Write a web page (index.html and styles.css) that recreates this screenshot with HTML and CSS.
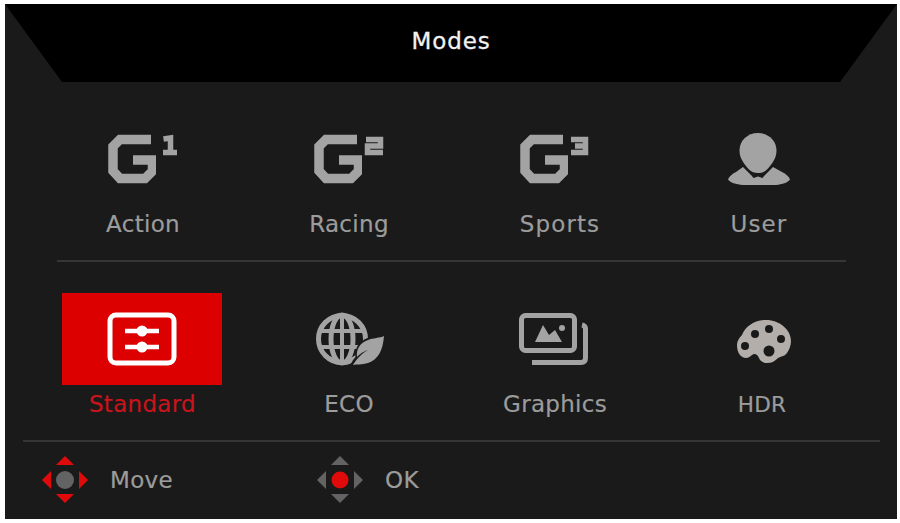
FILE: index.html
```html
<!DOCTYPE html>
<html>
<head>
<meta charset="utf-8">
<title>Modes</title>
<link rel="stylesheet" href="styles.css">
</head>
<body>
<svg class="defs" width="0" height="0">
	<symbol id="g-mark" viewBox="0 0 50 54">
		<polyline points="45,7.5 14,7.5 7,14.5 7,39 14,46.5 39,46.5 46.5,39 46.5,28 27,28"/>
	</symbol>
</svg>
<div class="panel">
	<div class="title">Modes</div>

	<div class="modes first">
		<div class="mode">
			<svg class="icon-g" viewBox="0 0 74 54">
				<use href="#g-mark" width="50" height="54" class="g"/>
				<polyline class="sup" points="57.5,7 64.5,6 64.5,21"/>
				<line class="sup" x1="57" y1="20.5" x2="71" y2="20.5"/>
			</svg>
			<span class="label">Action</span>
		</div>
		<div class="mode">
			<svg class="icon-g" viewBox="0 0 74 54">
				<use href="#g-mark" width="50" height="54" class="g"/>
				<polyline class="sup" points="54,7.5 68.5,7.5 68.5,14 55.5,14 55.5,20.5 71,20.5"/>
			</svg>
			<span class="label">Racing</span>
		</div>
		<div class="mode">
			<svg class="icon-g" viewBox="0 0 74 54">
				<use href="#g-mark" width="50" height="54" class="g"/>
				<polyline class="sup" points="53,7.5 67.5,7.5 67.5,20.5 53,20.5"/>
				<line class="sup" x1="57" y1="14" x2="67" y2="14"/>
			</svg>
			<span class="label wide sports">Sports</span>
		</div>
		<div class="mode">
			<svg class="icon-g" viewBox="725 132 74 54">
				<path class="fill" d="M759 133c10.500 0 18.500 7.500 18.500 17.500 0 8-5 14-9 18.500-3 3-6 4-9.500 4s-6.500-1-9.500-4c-4-4.500-9-10.500-9-18.500 0-10 8-17.500 18.500-17.500z"/>
				<path class="fill" d="M744 167l8.500 8.500 2 2.500 4.500-1.500 4.500 1.500 2-2.500 8.500-8.500 9 5c4 2 7 4.500 8 7.500-2 3-8 5-14 5.500h-33c-7-.5-13-2.500-15-5.500 1-3 4-5.500 8-7.500z"/>
			</svg>
			<span class="label wide user">User</span>
		</div>
	</div>
	<div class="line short"></div>

	<div class="modes second">
		<div class="mode">
			<div class="tile">
				<svg class="icon-std" viewBox="0 0 72 56">
					<rect x="4" y="4" width="64" height="48" rx="6"/>
					<line x1="19" y1="20" x2="53" y2="20"/>
					<line x1="19" y1="36" x2="53" y2="36"/>
					<circle cx="36" cy="20" r="5.500"/>
					<circle cx="36" cy="36" r="5.500"/>
				</svg>
			</div>
			<span class="label">Standard</span>
		</div>
		<div class="mode">
			<svg class="icon-big" viewBox="309 293 80 92">
				<g class="globe">
					<circle cx="342" cy="339" r="23.500"/>
					<ellipse cx="342" cy="339" rx="11" ry="24"/>
					<line x1="342" y1="315" x2="342" y2="363"/>
					<line x1="319" y1="331" x2="365" y2="331"/>
					<line x1="319" y1="347" x2="365" y2="347"/>
				</g>
				<path class="halo" d="M384 336c-1 14-6 24-16 27-6 2-12 1-15 2 1-2 3-5 5-7-1-9 3-15 11-18 5-2 11-2 15-4z"/>
				<path class="fill" d="M384 336c-1 14-6 24-16 27-6 2-12 1-15 2 1-2 7-11 15-15-6 2-9 5-11 7-1-8 3-14 11-17 5-2 12-2 16-4z"/>
			</svg>
			<span class="label">ECO</span>
		</div>
		<div class="mode">
			<svg class="icon-big" viewBox="515 293 80 92">
				<rect class="frame" x="521.500" y="315.500" width="53" height="35" rx="4"/>
				<path class="frame" d="M532 362.500h49c3 0 4.500-1.500 4.500-4.500v-29c0-2-1-3.500-3.500-4"/>
				<path class="fill" d="M535 342l8-17 6 10 6-5 7 12z"/>
				<circle class="fill" cx="562" cy="328" r="3"/>
			</svg>
			<span class="label">Graphics</span>
		</div>
		<div class="mode">
			<svg class="icon-big" viewBox="721 293 80 92">
				<path class="palette" d="M737 345c0-4 2-7 5-10 3-8 12-15 24-15 14 0 25 10 25 21 0 5-2 9-4 12-3 4-6 3-9 5-3 3-6 5-11 5-4 0-7-2-8-5-1-2-2-4-5-4-2 0-4 4-8 4-5 0-9-5-9-13z"/>
				<circle class="hole" cx="745" cy="346" r="4"/>
				<circle class="hole" cx="755" cy="334" r="4"/>
				<circle class="hole" cx="769" cy="329" r="4"/>
				<circle class="hole" cx="781" cy="339" r="4"/>
				<circle class="hole" cx="769" cy="351" r="5.500"/>
			</svg>
			<span class="label hdr">HDR</span>
		</div>
	</div>
	<div class="line"></div>

	<div class="hints">
		<div class="hint move">
			<svg class="pad" viewBox="0 0 48 48">
				<polygon class="on" points="24,0 33,9 15,9"/>
				<polygon class="on" points="24,47 33,38 15,38"/>
				<polygon class="on" points="1,24 10,15 10,33"/>
				<polygon class="on" points="47,24 38,15 38,33"/>
				<circle class="off" cx="24" cy="24" r="9"/>
			</svg>
			<span class="label">Move</span>
		</div>
		<div class="hint">
			<svg class="pad" viewBox="0 0 48 48">
				<polygon class="off" points="24,0 33,9 15,9"/>
				<polygon class="off" points="24,47 33,38 15,38"/>
				<polygon class="off" points="1,24 10,15 10,33"/>
				<polygon class="off" points="47,24 38,15 38,33"/>
				<circle class="on" cx="24" cy="24" r="8.500"/>
			</svg>
			<span class="label">OK</span>
		</div>
	</div>
</div>
</body>
</html>
```

FILE: styles.css
```css
body {
    margin: 0;
    background: #fff;
    font-family: "DejaVu Sans", sans-serif;
    overflow: hidden;
}
.defs { display: block; height: 0; }
.panel {
    width: 892px;
    height: 515px;
    margin: 4px 0 0 5px;
    background: #1a1a1a;
}
.title {
    height: 78px;
    display: flex;
    align-items: center;
    justify-content: center;
    padding-bottom: 4px;
    box-sizing: border-box;
    background: #000;
    clip-path: polygon(0 0, 100% 0, 835px 100%, 57px 100%);
    color: #f2f2f2;
    font-size: 23px;
    letter-spacing: .9px;
    -webkit-text-stroke: .3px #f2f2f2;
}

/* rows of modes */
.modes {
    display: grid;
    grid-template-columns: repeat(4, 206px);
    padding-left: 35px;
}
.modes.first { padding-top: 50px; }
.modes.second { padding-top: 31px; }
.mode {
    display: flex;
    flex-direction: column;
    align-items: center;
}
.label {
    font-size: 23px;
    line-height: 28px;
    letter-spacing: .3px;
    color: #9c9c9c;
    white-space: nowrap;
    -webkit-text-stroke: .2px #9c9c9c;
}
.first .label { margin: 24px 0 22px; }
.second .label { margin: 5px 0 22px; }
.first .wide { letter-spacing: 1.100px; }
.first .sports { margin-left: 10px; }
.first .user { margin-right: 4px; }
.second .mode:first-child .label {
    color: #c8141a;
    -webkit-text-stroke-color: #c8141a;
    margin-right: 1px;
}
.second .hdr {
    font-size: 21.500px;
    margin: 6px 0 21px 2px;
}

.line {
    height: 2px;
    margin: 0 17px 0 18px;
    background: #363636;
}
.line.short { margin: 0 51px 0 52px; }

/* icons */
.icon-g { width: 74px; height: 54px; display: block; }
.icon-big { width: 80px; height: 92px; display: block; }
.g { fill: none; stroke: #a3a3a3; stroke-width: 9.500; }
.sup { fill: none; stroke: #a3a3a3; stroke-width: 5.500; }
.fill { fill: #a3a3a3; }
.tile {
    width: 160px;
    height: 92px;
    margin-right: 2px;
    display: flex;
    align-items: center;
    justify-content: center;
    background: #dc0000;
}
.icon-std { width: 72px; height: 56px; }
.icon-std rect { fill: none; stroke: #fff; stroke-width: 5; }
.icon-std line { stroke: #fff; stroke-width: 4.500; }
.icon-std circle { fill: #fff; }
.globe circle, .globe ellipse { fill: none; stroke: #a3a3a3; stroke-width: 5; }
.globe line { stroke: #a3a3a3; stroke-width: 4; }
.halo { fill: #1a1a1a; stroke: #1a1a1a; stroke-width: 5; }
.frame { fill: none; stroke: #a3a3a3; stroke-width: 5; }
.palette { fill: #b3aeaa; }
.hole { fill: #1a1a1a; }

/* bottom hints */
.hints {
    height: 75px;
    display: flex;
    align-items: center;
    padding-left: 36px;
}
.hint {
    display: flex;
    align-items: center;
    gap: 21px;
}
.hint.move { width: 275px; }
.pad { width: 48px; height: 48px; display: block; }
.on { fill: #e00a0a; }
.off { fill: #636363; }
```
